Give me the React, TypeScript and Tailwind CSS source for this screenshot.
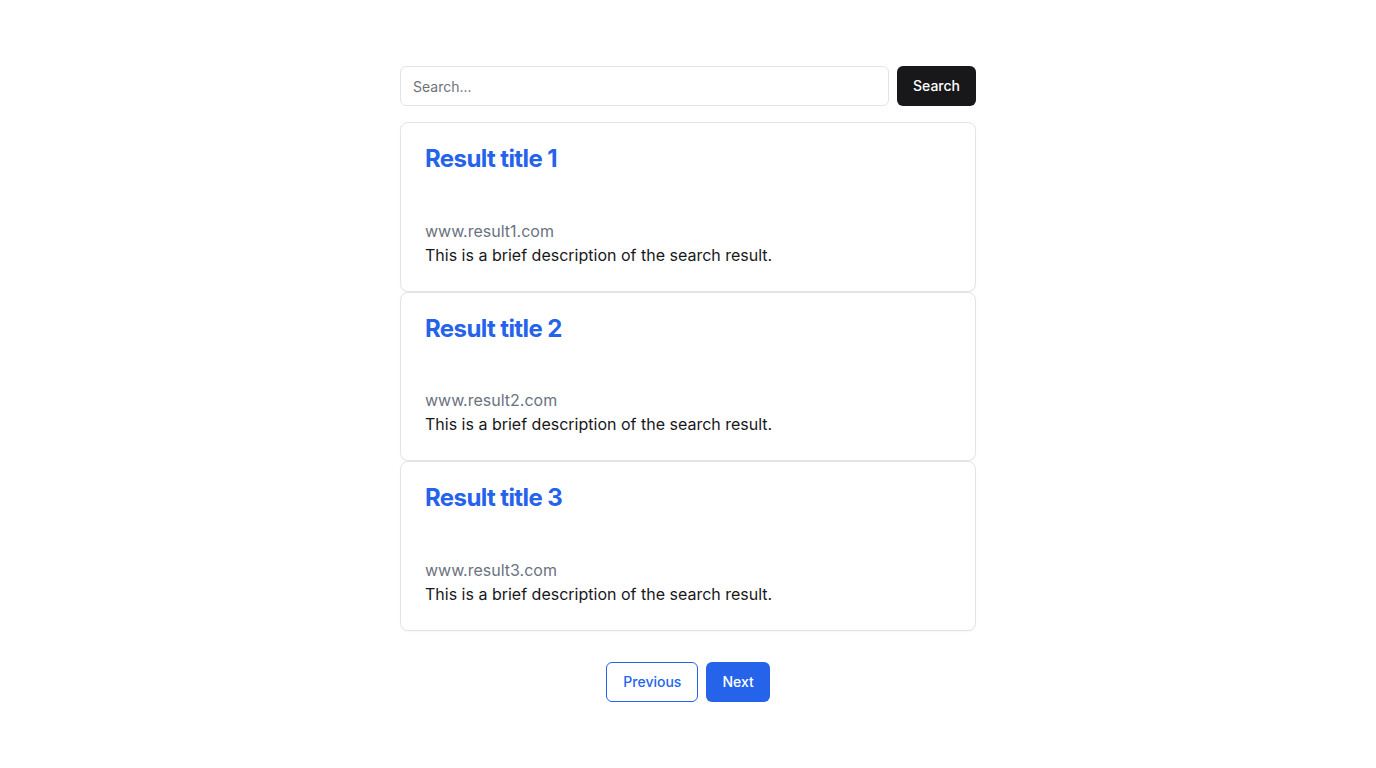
const RESULTS = [
  { title: "Result title 1", url: "www.result1.com" },
  { title: "Result title 2", url: "www.result2.com" },
  { title: "Result title 3", url: "www.result3.com" },
];

function ResultCard({ title, url }: { title: string; url: string }) {
  return (
    <div className="rounded-lg border border-[#e4e4e7] bg-white shadow-[0_1px_2px_rgba(0,0,0,0.04)]">
      <div className="p-6 pb-[23.67px]">
        <h3 className="text-2xl leading-none font-bold tracking-tight text-[#2563eb]">{title}</h3>
      </div>
      <div className="p-6">
        <p className="text-base leading-6 text-[#6b7280]">{url}</p>
        <p className="text-base leading-6 text-[#18181b]">This is a brief description of the search result.</p>
      </div>
    </div>
  );
}

export default function App() {
  return (
    <div className="min-h-screen bg-white font-['Inter',sans-serif]">
      <div className="mx-auto max-w-xl pt-[66px]">
        <div className="mb-4 flex gap-2">
          <input
            type="text"
            placeholder="Search..."
            className="h-10 flex-1 rounded-md border border-[#e4e4e7] bg-white px-3 text-sm text-[#18181b] placeholder:text-[#71717a] outline-none"
          />
          <button className="h-10 rounded-md bg-[#18181b] px-4 text-sm font-medium text-white">Search</button>
        </div>
        <div className="flex flex-col">
          {RESULTS.map((r) => (
            <ResultCard key={r.title} title={r.title} url={r.url} />
          ))}
        </div>
        <div className="mt-[31px] flex justify-center gap-2">
          <button className="h-10 rounded-md border border-[#2563eb] bg-white px-4 text-sm font-medium text-[#2563eb]">Previous</button>
          <button className="h-10 rounded-md bg-[#2563eb] px-4 text-sm font-medium text-white">Next</button>
        </div>
      </div>
    </div>
  );
}
